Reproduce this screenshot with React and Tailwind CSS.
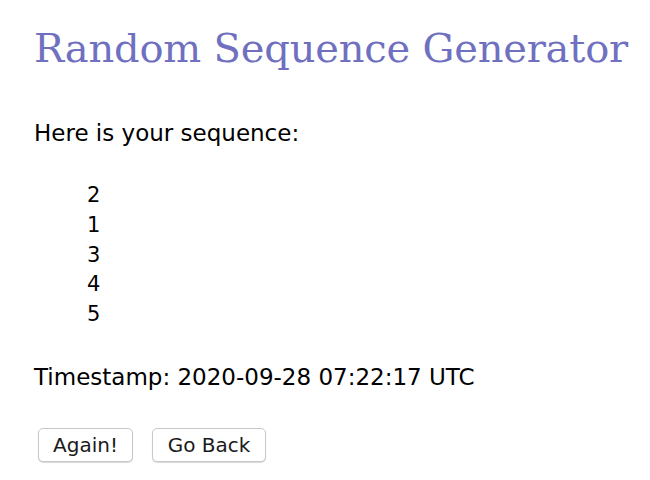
import React from "react";

export default function App() {
  const sequence = [2, 1, 3, 4, 5];

  return (
    <div className="min-h-[480px] bg-white pl-[34px] pt-[22px] text-black font-['DejaVu_Sans',sans-serif]">
      <h1 className="text-[40px] leading-[52px] text-[#7070c0] font-['DejaVu_Serif',serif] tracking-[-0.2px]">
        Random Sequence Generator
      </h1>

      <p className="mt-[44px] text-[23px] leading-[30px]">Here is your sequence:</p>

      {/* sequence list */}
      <ul className="mt-[33px] pl-[53px] text-[21px] leading-[29.75px]">
        {sequence.map((n, i) => (
          <li key={i}>{n}</li>
        ))}
      </ul>

      <p className="mt-[32px] text-[23px] leading-[30px]">
        Timestamp: 2020-09-28 07:22:17 UTC
      </p>

      <div className="mt-[36px] flex gap-[19px] pl-[4px]">
        <button className="h-[34px] w-[95px] rounded-[5px] border border-[#c8c8c8] bg-white text-[20px] text-[#1a1a1a] shadow-[0_1px_1px_rgba(0,0,0,0.15)]">
          Again!
        </button>
        <button className="h-[34px] w-[114px] rounded-[5px] border border-[#c8c8c8] bg-white text-[20px] text-[#1a1a1a] shadow-[0_1px_1px_rgba(0,0,0,0.15)]">
          Go Back
        </button>
      </div>
    </div>
  );
}
